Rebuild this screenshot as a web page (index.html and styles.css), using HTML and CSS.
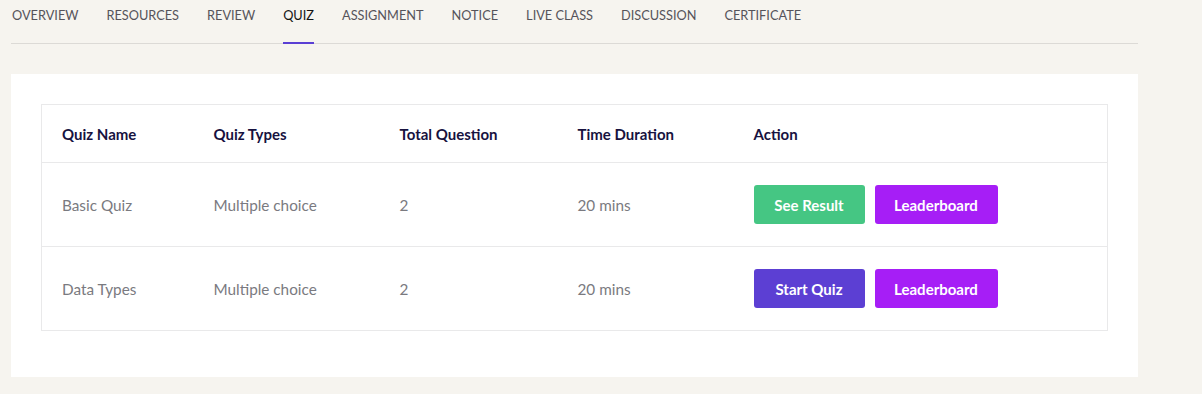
FILE: index.html
```html
<!DOCTYPE html>
<html>
<head>
<meta charset="utf-8">
<link rel="stylesheet" href="styles.css">
</head>
<body>
<div class="page">
  <nav class="tabs">
    <a class="tab">OVERVIEW</a>
    <a class="tab">RESOURCES</a>
    <a class="tab">REVIEW</a>
    <a class="tab active">QUIZ</a>
    <a class="tab">ASSIGNMENT</a>
    <a class="tab">NOTICE</a>
    <a class="tab">LIVE CLASS</a>
    <a class="tab">DISCUSSION</a>
    <a class="tab">CERTIFICATE</a>
  </nav>
  <section class="card">
    <table class="quiz-table">
      <colgroup>
        <col class="c1"><col class="c2"><col class="c3"><col class="c4"><col>
      </colgroup>
      <thead>
        <tr>
          <th>Quiz Name</th>
          <th>Quiz Types</th>
          <th>Total Question</th>
          <th>Time Duration</th>
          <th>Action</th>
        </tr>
      </thead>
      <tbody>
        <tr>
          <td>Basic Quiz</td>
          <td>Multiple choice</td>
          <td>2</td>
          <td>20 mins</td>
          <td><div class="actions"><button class="btn green">See Result</button><button class="btn violet">Leaderboard</button></div></td>
        </tr>
        <tr>
          <td>Data Types</td>
          <td>Multiple choice</td>
          <td>2</td>
          <td>20 mins</td>
          <td><div class="actions"><button class="btn indigo">Start Quiz</button><button class="btn violet">Leaderboard</button></div></td>
        </tr>
      </tbody>
    </table>
  </section>
</div>
</body>
</html>
```
FILE: styles.css
```css
html, body {
  margin: 0;
  padding: 0;
  background: #f6f4ef;
  font-family: "Lato", "Open Sans", sans-serif;
}
.page {
  width: 1127px;
  padding: 0 0 0 11px;
}
.tabs {
  display: flex;
  gap: 28px;
  height: 43px;
  border-bottom: 1px solid #dcdad6;
  padding-left: 1px;
}
.tab {
  font-size: 12.75px;
  line-height: 30px;
  color: #55535a;
  height: 43px;
  box-sizing: border-box;
}
.tab.active {
  color: #141414;
  border-bottom: 2px solid #5a3fd4;
  height: 44px;
}
.card {
  margin-top: 30px;
  background: #ffffff;
  padding: 30px 30px 46px 30px;
}
.quiz-table {
  width: 100%;
  border-collapse: collapse;
  border: 1px solid #e9e9ea;
}
.c1 { width: 152px; }
.c2 { width: 186px; }
.c3 { width: 178px; }
.c4 { width: 176px; }
.quiz-table th {
  text-align: left;
  font-weight: 700;
  font-size: 15px;
  color: #17123f;
  height: 57px;
  padding: 0 0 0 20px;
  border-bottom: 1px solid #e9e9ea;
}
.quiz-table td {
  font-size: 15.3px;
  color: #7a7a80;
  height: 83px;
  padding: 0 0 0 20px;
  border-bottom: 1px solid #e9e9ea;
}
.actions {
  display: flex;
  gap: 10px;
}
.btn {
  border: none;
  border-radius: 3px;
  height: 39px;
  color: #fff;
  font-family: inherit;
  font-weight: 700;
  font-size: 15px;
  padding: 0;
}
.green { background: #45c683; width: 111px; }
.violet { background: #a61ef6; width: 123px; }
.indigo { background: #5c3fd3; width: 111px; }
```
